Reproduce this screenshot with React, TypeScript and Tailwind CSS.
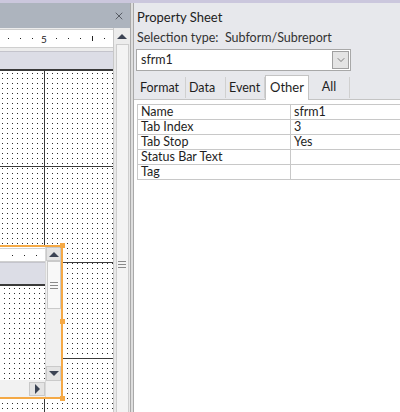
import { X, ChevronDown } from 'lucide-react'

// 1px square dots every 5px, like the Access design grid
const dots = 'bg-[conic-gradient(at_1px_1px,transparent_75%,#2a2a2a_0)] bg-[length:5px_5px] bg-[position:2px_2px]'

const rows: [string, string][] = [
  ['Name', 'sfrm1'],
  ['Tab Index', '3'],
  ['Tab Stop', 'Yes'],
  ['Status Bar Text', ''],
  ['Tag', ''],
]

const tabs: [string, string][] = [
  ['Format', 'w-[49px]'],
  ['Data', 'w-[40px]'],
  ['Event', 'w-[39px]'],
]

function Grip() {
  return (
    <div className="flex flex-col gap-[2px]">
      <div className="w-[8px] h-px bg-[#8a8a8a]" />
      <div className="w-[8px] h-px bg-[#8a8a8a]" />
      <div className="w-[8px] h-px bg-[#8a8a8a]" />
    </div>
  )
}

function Tri({ dir }: { dir: 'up' | 'down' | 'right' }) {
  if (dir === 'up')
    return <div className="w-0 h-0 border-x-[5px] border-x-transparent border-b-[5px] border-b-[#3c4454]" />
  if (dir === 'down')
    return <div className="w-0 h-0 border-x-[5px] border-x-transparent border-t-[5px] border-t-[#3c4454]" />
  return <div className="w-0 h-0 border-y-[5px] border-y-transparent border-l-[5px] border-l-[#3c4454]" />
}

function Ruler({ marks }: { marks: string[] }) {
  return (
    <div className="flex items-center h-full text-[10px] leading-none text-[#222]">
      {marks.map((m, i) => (
        <span key={i} className="w-[12px] shrink-0 flex justify-center">
          {m === '.' ? <span className="w-px h-px bg-[#222]" /> : m === '|' ? <span className="w-px h-[5px] bg-[#222]" /> : m}
        </span>
      ))}
    </div>
  )
}

export default function App() {
  return (
    <div className="w-[400px] h-[412px] overflow-hidden flex flex-col bg-white font-['Lato',sans-serif]">
      <div className="h-[3px] bg-[#cbc7dd] shrink-0" />
      <div className="flex flex-1 min-h-0">
        {/* design surface */}
        <div className="w-[130px] shrink-0 flex flex-col bg-[#ececec]">
          <div className="h-[25px] bg-[#adb4be] flex items-center justify-end pr-[5px] shrink-0">
            <X className="w-[12px] h-[12px] text-[#3b3f46]" strokeWidth={1.5} />
          </div>
          <div className="flex flex-1 min-h-0">
            <div className="w-[114px] flex flex-col border-r border-[#c8c8c8]">
              <div className="h-[19px] mt-[1px] bg-white border-y border-[#cfcfcf] pl-[2px] shrink-0">
                <Ruler marks={['.', '.', '.', '5', '.', '.', '.', '|', '.']} />
              </div>
              <div className="h-[3px] bg-[#ececec] shrink-0" />
              <div className="h-[20px] bg-[#dcdde6] border-t border-[#c4c4cc] border-b-2 border-b-[#3a3a3a] shrink-0" />
              <div className={`relative flex-1 bg-white ${dots}`}>
                <div className="absolute left-[44px] top-0 bottom-0 w-px bg-[#3a3a3a]" />
                <div className="absolute left-0 right-0 top-[95px] h-px bg-[#3a3a3a]" />
                <div className="absolute left-0 right-0 top-[191px] h-px bg-[#3a3a3a]" />
                <div className="absolute left-0 right-0 top-[287px] h-px bg-[#3a3a3a]" />

                {/* selected subform */}
                <div className="absolute left-[-10px] top-[174px] w-[73px] h-[154px] border-2 border-[#f4a946] bg-white flex">
                  <div className="flex-1 flex flex-col">
                    <div className="h-[14px] mt-[1px] border-y border-[#d0d0d0] shrink-0 pl-[14px]">
                      <Ruler marks={['.', '.', '.']} />
                    </div>
                    <div className="h-[24px] bg-[#dcdde6] border-t border-[#c4c4cc] border-b-2 border-b-[#3a3a3a] shrink-0" />
                    <div className={`flex-1 ${dots}`} />
                    <div className="h-[17px] bg-[#f2f2f2] flex justify-end items-center shrink-0">
                      <div className="w-[16px] h-[14px] bg-[#e4e4e4] border border-[#c8c8c8] flex items-center justify-center">
                        <Tri dir="right" />
                      </div>
                    </div>
                  </div>
                  <div className="w-[16px] bg-[#f0f0f0] border-l border-[#d8d8d8] flex flex-col items-center">
                    <div className="h-[14px] w-full flex items-center justify-center bg-[#e4e4e4] border border-[#cacaca]">
                      <Tri dir="up" />
                    </div>
                    <div className="h-[48px] w-[14px] bg-[#f8f8f8] border border-[#cacaca] flex items-center justify-center">
                      <Grip />
                    </div>
                    <div className="flex-1" />
                    <div className="h-[15px] w-full flex items-center justify-center bg-[#e4e4e4] border border-[#cacaca] mb-[16px]">
                      <Tri dir="down" />
                    </div>
                  </div>
                  <div className="absolute right-[-4px] top-[-4px] w-[5px] h-[5px] bg-[#f4a946]" />
                  <div className="absolute right-[-4px] top-[72px] w-[5px] h-[5px] bg-[#f4a946]" />
                  <div className="absolute right-[-4px] bottom-[-4px] w-[5px] h-[5px] bg-[#f4a946]" />
                </div>
              </div>
            </div>
            <div className="flex-1 flex flex-col items-center bg-[#e8e8e8]">
              <div className="h-[16px] w-full flex items-center justify-center bg-[#ececec]">
                <Tri dir="up" />
              </div>
              <div className="flex-1 w-[13px] bg-[#f3f3f3] border border-[#cdcdcd] border-b-0 flex flex-col items-center pt-[216px]">
                <Grip />
              </div>
            </div>
          </div>
        </div>

        {/* splitter */}
        <div className="w-[4px] shrink-0 bg-[#dedede] border-x border-[#a9a9a9]" />

        {/* property sheet */}
        <div className="flex-1 flex flex-col bg-[#e7e8ec] text-[12.5px] text-[#1e1e1e]">
          <div className="h-[25px] pt-[5px] flex items-center pl-[3px] text-[13px] text-[#222]">Property Sheet</div>
          <div className="h-[20px] flex items-center pl-[3px] text-[#333] whitespace-pre">Selection type:  Subform/Subreport</div>
          <div className="ml-[2px] mt-[1px] w-[215px] h-[22px] bg-white border border-[#a8a8a8] flex items-center pl-[4px] pr-[1px]">
            <span className="flex-1">sfrm1</span>
            <div className="w-[17px] h-[18px] bg-[#e4e4e4] border border-[#a0a0a0] flex items-center justify-center">
              <ChevronDown className="w-[12px] h-[12px] text-[#444]" strokeWidth={1.3} />
            </div>
          </div>
          <div className="flex items-end h-[29px] pl-[3px] border-b border-[#c4c4c4]">
            {tabs.map(([t, w]) => (
              <div key={t} className={`${w} h-[21px] pl-[3px] pt-[2px] flex items-center border-r border-[#d0d0d0] mb-[1px]`}>
                {t}
              </div>
            ))}
            <div className="h-[25px] w-[44px] bg-white border-x border-t border-[#c4c4c4] -mb-px flex items-center justify-center text-[13px]">
              Other
            </div>
            <div className="h-[21px] w-[41px] flex items-end justify-center pb-[1px] border-r border-[#d0d0d0] mb-[1px]">
              All
            </div>
          </div>
          <div className="flex-1 bg-white pl-[3px] pt-[4px]">
            <div className="border-l border-t border-[#c8c8c8]">
              {rows.map(([k, v]) => (
                <div key={k} className="flex h-[15px] leading-[14px] border-b border-[#c8c8c8]">
                  <div className="w-[153px] pl-[3px] border-r border-[#c8c8c8] overflow-hidden">{k}</div>
                  <div className="flex-1 pl-[3px] overflow-hidden">{v}</div>
                </div>
              ))}
            </div>
          </div>
        </div>
      </div>
    </div>
  )
}
